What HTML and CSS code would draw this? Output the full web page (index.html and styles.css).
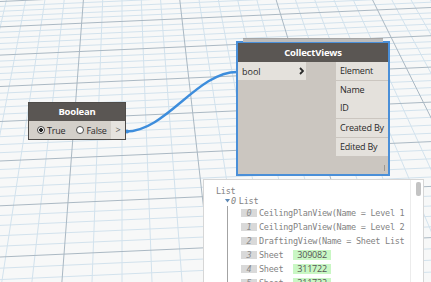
FILE: index.html
```html
<!DOCTYPE html>
<html lang="en">
<head>
    <meta charset="UTF-8">
    <title>CollectViews graph</title>
    <link rel="stylesheet" href="styles.css">
</head>
<body>
    <div class="canvas">
        <!-- background grid, drawn in perspective -->
        <svg class="grid" viewBox="0 0 431 282" width="431" height="282">
            <path class="grid-minor" d="M0 6.4L431 -13M0 11.3L431 -8.1M0 16.5L431 -2.9M0 21.6L431 2.2M0 32.3L431 12.9M0 37.9L431 18.5M0 43.5L431 24.1M0 49.3L431 29.9M0 61.1L431 41.7M0 67.2L431 47.8M0 73.5L431 54.1M0 79.9L431 60.5M0 93.2L431 73.8M0 100L431 80.6M0 107L431 87.6M0 114.2L431 94.8M0 129L431 109.6M0 136.7L431 117.3M0 144.6L431 125.2M0 152.7L431 133.3M0 169.5L431 150.1M0 178.2L431 158.8M0 187.2L431 167.8M0 196.4L431 177M0 215.5L431 196.1M0 225.4L431 206M0 235.7L431 216.3M0 246.2L431 226.8M0 268.2L431 248.8M0 279.6L431 260.2M0 291.5L431 272.1M0 303.7L431 284.3
                M6.4 0L-58.2 282M25.6 0L-28.2 282M44.9 0L1.8 282M64.2 0L31.9 282M102.7 0L92 282M122 0L122 282M141.3 0L152 282M160.6 0L182.1 282M199.1 0L242.2 282M218.4 0L272.2 282M237.7 0L302.2 282M256.9 0L332.3 282M295.5 0L392.3 282M314.8 0L422.4 282M334 0L452.4 282M353.3 0L482.5 282M391.9 0L542.5 282M411.1 0L572.6 282M430.4 0L602.6 282"/>
            <path class="grid-major" d="M0 1.5L431 -17.9M0 26.9L431 7.5M0 55.1L431 35.7M0 86.5L431 67.1M0 121.5L431 102.1M0 161L431 141.6M0 205.8L431 186.4M0 257L431 237.6
                M83.4 0L61.9 282M179.8 0L212.1 282M276.2 0L362.3 282M372.6 0L512.5 282"/>
        </svg>

        <svg class="wires" viewBox="0 0 431 282" width="431" height="282">
            <path class="wire" d="M126 131.5C166 131.5 197 72 237 72"/>
            <circle class="wire-end" cx="127" cy="131.5" r="2"/>
        </svg>

        <div class="node node-bool">
            <div class="node-title">Boolean</div>
            <div class="bool-body">
                <div class="radios">
                    <span class="radio checked">True</span>
                    <span class="radio">False</span>
                </div>
                <span class="bool-out">&gt;</span>
            </div>
        </div>

        <div class="node node-views">
            <div class="node-title">CollectViews</div>
            <div class="node-ports">
                <div class="inputs">
                    <div class="in-port">
                        <span>bool</span>
                        <svg class="chevron" width="5" height="8" viewBox="0 0 5 8"><path d="M1 1L4 4L1 7"/></svg>
                    </div>
                </div>
                <div class="outputs">
                    <div class="out-row">Element</div>
                    <div class="out-group">
                        <div class="out-row">Name</div>
                        <div class="out-row">ID</div>
                    </div>
                    <div class="out-row">Created By</div>
                    <div class="out-row">Edited By</div>
                    <span class="grip"></span>
                </div>
            </div>
        </div>

        <div class="preview">
            <div class="preview-list">
                <div class="list-title">List</div>
                <div class="tree-head">
                    <svg class="caret" width="5" height="4" viewBox="0 0 5 4"><path d="M0 0H5L2.5 3.5Z"/></svg>
                    <span class="tree-idx">0</span>
                    <span>List</span>
                </div>
                <div class="tree-items">
                    <div class="item"><span class="idx">0</span><span>CeilingPlanView(Name = Level 1</span></div>
                    <div class="item"><span class="idx">1</span><span>CeilingPlanView(Name = Level 2</span></div>
                    <div class="item"><span class="idx">2</span><span>DraftingView(Name = Sheet List</span></div>
                    <div class="item"><span class="idx">3</span><span>Sheet</span><span class="tag">309082</span></div>
                    <div class="item"><span class="idx">4</span><span>Sheet</span><span class="tag">311722</span></div>
                    <div class="item"><span class="idx">5</span><span>Sheet</span><span class="tag">311732</span></div>
                </div>
            </div>
            <div class="scroll-lane"><div class="scroll-thumb"></div></div>
        </div>
    </div>
</body>
</html>
```

FILE: styles.css
```css
body {
    margin: 0;
    font-family: "Open Sans", "DejaVu Sans", sans-serif;
}
.canvas {
    position: relative;
    width: 431px;
    height: 282px;
    overflow: hidden;
    background-color: #f7f8f8;
}
.grid, .wires {
    position: absolute;
    left: 0;
    top: 0;
}
.grid-minor {
    stroke: #d2e2ed;
    stroke-width: 1;
    fill: none;
}
.grid-major {
    stroke: #aab8c3;
    stroke-width: 1;
    fill: none;
}
.wire {
    stroke: #3d8ddc;
    stroke-width: 2.4;
    fill: none;
}
.wire-end {
    fill: #3d8ddc;
}

/* nodes */
.node {
    position: absolute;
}
.node-title {
    background-color: #5a5653;
    color: white;
    font-weight: bold;
    text-align: center;
    letter-spacing: -0.2px;
}
.node-bool {
    left: 28px;
    top: 102px;
    width: 96px;
    border: 1px solid #4f4c49;
}
.node-bool .node-title {
    height: 18px;
    line-height: 18px;
    font-size: 9.5px;
}
.bool-body {
    display: flex;
    height: 18px;
    background-color: #d4d0ca;
}
.radios {
    flex: 1;
    display: flex;
    align-items: center;
    padding-left: 8px;
    gap: 11px;
}
.radio {
    display: inline-flex;
    align-items: center;
    gap: 2px;
    font-size: 9px;
    letter-spacing: -0.2px;
    color: #2a2a2a;
}
.radio::before {
    content: "";
    width: 6px;
    height: 6px;
    border: 1px solid #4a4a4a;
    border-radius: 50%;
    background-color: white;
}
.radio.checked::before {
    background: radial-gradient(circle, #222 0 1.6px, white 2.2px);
}
.bool-out {
    width: 14px;
    background-color: #e6e3de;
    text-align: center;
    font-size: 9px;
    line-height: 18px;
    color: #555;
}

.node-views {
    left: 236px;
    top: 41px;
    width: 150px;
    border: 2px solid #4a8fd8;
    background-color: #cbc6c0;
}
.node-views::before {
    content: "";
    position: absolute;
    left: 5px;
    right: 5px;
    top: -5px;
    height: 3px;
    background-color: #bcbcbc;
    border-top: 1px solid #a5a5a5;
}
.node-views .node-title {
    height: 19px;
    line-height: 19px;
    font-size: 9.5px;
}
.node-ports {
    display: flex;
    height: 112px;
}
.inputs {
    width: 68px;
}
.in-port {
    display: flex;
    align-items: center;
    justify-content: space-between;
    height: 18px;
    padding: 0 2px 0 4px;
    background-color: #e4e1dc;
    font-size: 9px;
    color: #2a2a2a;
}
.chevron path {
    stroke: #2a2a2a;
    stroke-width: 1.8;
    fill: none;
}
.outputs {
    margin-left: auto;
    width: 52px;
    display: flex;
    flex-direction: column;
    gap: 1px;
}
.out-row {
    height: 18px;
    line-height: 18px;
    padding-left: 4px;
    background-color: #e4e1dc;
    font-size: 9px;
    letter-spacing: -0.2px;
    color: #2a2a2a;
    white-space: nowrap;
}
.out-group .out-row:last-child {
    height: 19px;
}
.grip {
    margin-top: auto;
    margin-bottom: 3px;
    margin-right: 3px;
    align-self: flex-end;
    width: 1px;
    height: 6px;
    background-color: #9d9891;
}

/* watch preview */
.preview {
    position: absolute;
    left: 203px;
    top: 179px;
    width: 219px;
    height: 110px;
    display: flex;
    border: 1px solid #d6d6d6;
    background-color: white;
}
.preview-list {
    flex: 1;
    overflow: hidden;
    padding: 6px 0 0 12px;
    border-right: 1px solid #ececec;
    font-family: "DejaVu Sans Mono", monospace;
    font-size: 8.5px;
    letter-spacing: -0.27px;
    color: #828282;
    white-space: nowrap;
}
.list-title {
    height: 10px;
    line-height: 10px;
}
.tree-head {
    display: flex;
    align-items: center;
    height: 10px;
    padding-left: 9px;
}
.caret {
    margin-right: 1px;
}
.caret path {
    fill: #5d89b6;
}
.tree-idx {
    font-style: italic;
    margin-right: 3px;
}
.tree-items {
    margin-left: 11px;
    padding-left: 13px;
    border-left: 1px solid #a3a3a3;
}
.item {
    display: flex;
    align-items: center;
    height: 14px;
}
.idx {
    width: 16px;
    height: 8px;
    line-height: 8px;
    margin-right: 2px;
    background-color: #d9d9d9;
    color: #8c8c8c;
    font-style: italic;
    text-align: center;
}
.tag {
    margin-left: 10px;
    padding: 0 4px;
    height: 10px;
    line-height: 10px;
    background-color: #c9f7c4;
    color: #555;
    font-family: "Open Sans", sans-serif;
    font-size: 9px;
    letter-spacing: -0.2px;
}
.scroll-lane {
    width: 12px;
    padding-top: 2px;
}
.scroll-thumb {
    width: 5px;
    height: 14px;
    margin-left: 5px;
    border-radius: 2px;
    background-color: #c3c3c3;
}
```
